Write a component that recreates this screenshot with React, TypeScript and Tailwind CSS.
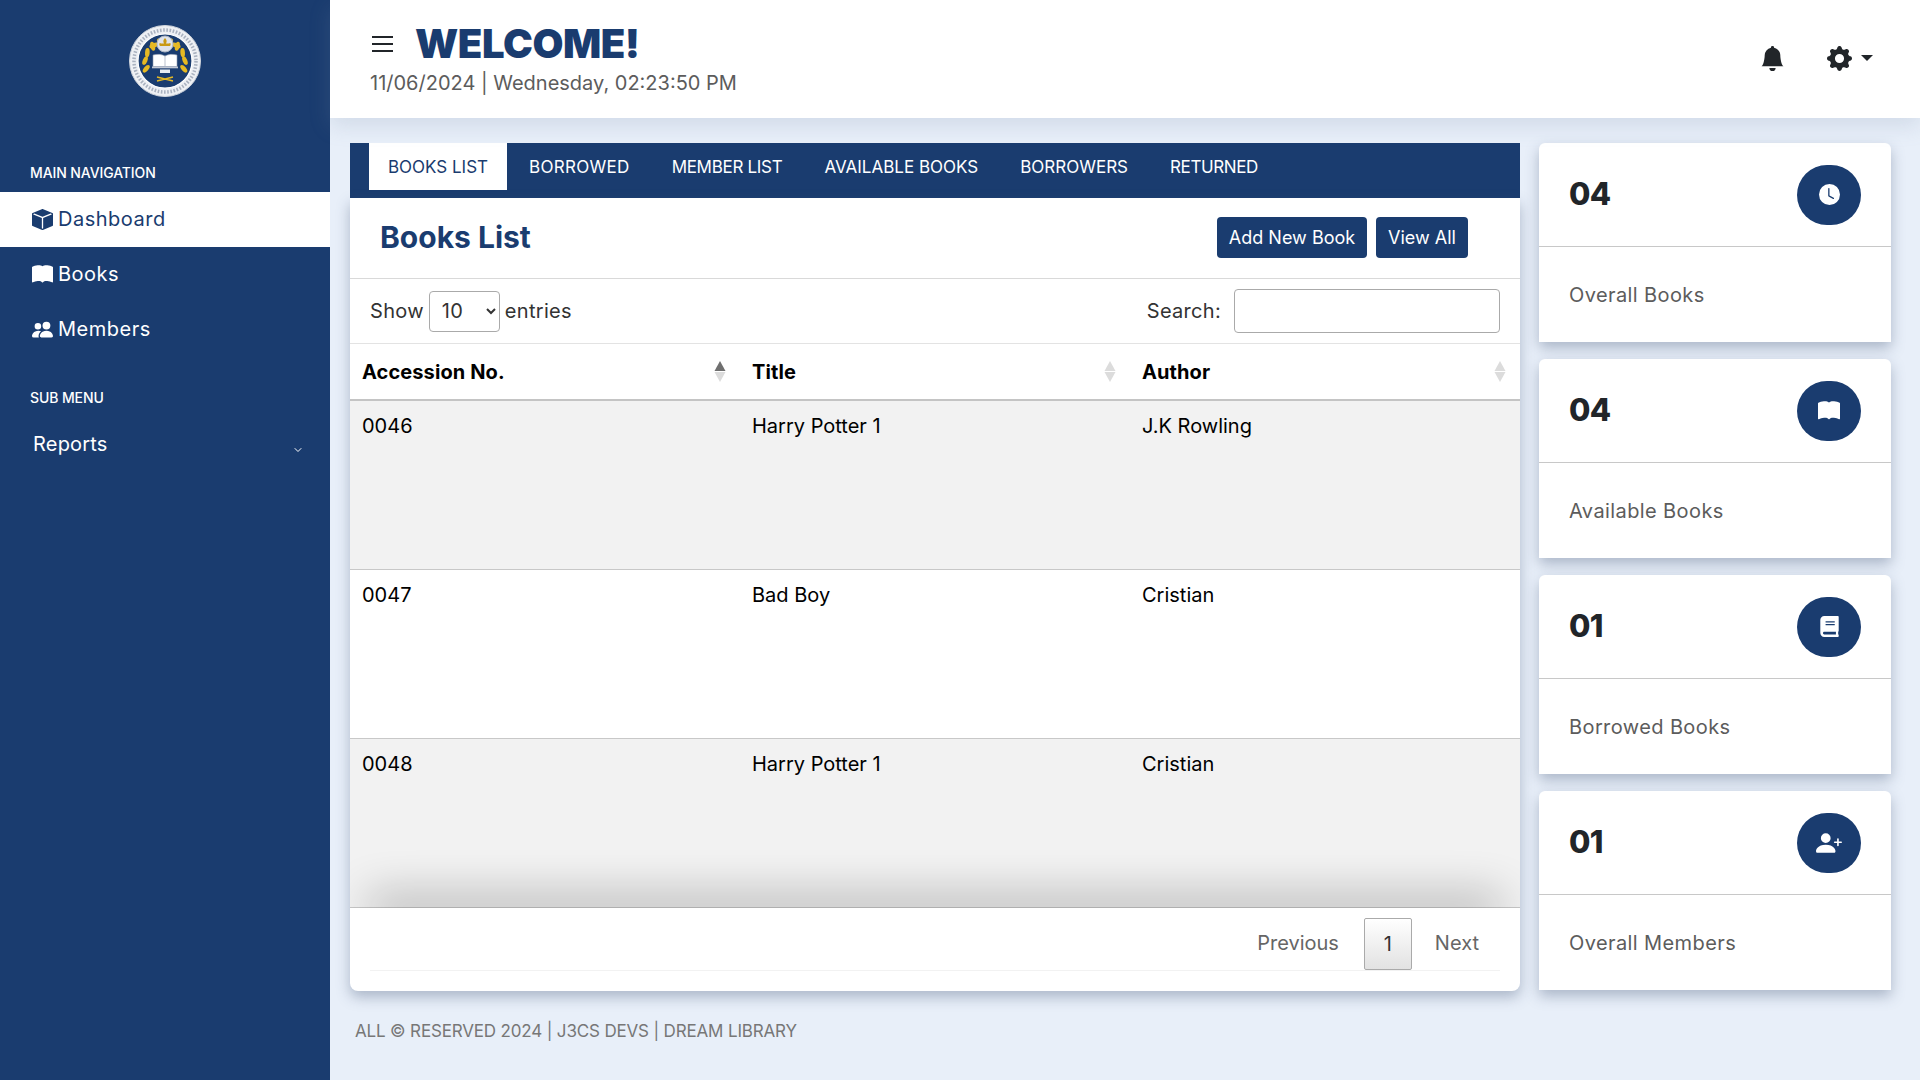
import { BsBellFill, BsBookFill, BsBoxFill, BsClockFill, BsGearFill, BsPeopleFill, BsPersonPlusFill } from 'react-icons/bs';
import { FaBook } from 'react-icons/fa';
import { ChevronDown } from 'lucide-react';

const navItems = [
  { label: 'Dashboard', icon: BsBoxFill, active: true },
  { label: 'Books', icon: BsBookFill, active: false },
  { label: 'Members', icon: BsPeopleFill, active: false },
];

const tabs = [
  { label: 'BOOKS LIST', cls: 'w-[138px] bg-white text-[#1a3c6f]' },
  { label: 'BORROWED', cls: 'ml-[1px] px-[21px] tracking-[0.3px] text-white' },
  { label: 'MEMBER LIST', cls: 'px-[21px] tracking-[-0.3px] text-white' },
  { label: 'AVAILABLE BOOKS', cls: 'px-[21px] text-white' },
  { label: 'BORROWERS', cls: 'px-[21px] text-white' },
  { label: 'RETURNED', cls: 'px-[21px] tracking-[-0.4px] text-white' },
];

const rows = [
  { no: '0046', title: 'Harry Potter 1', author: 'J.K Rowling' },
  { no: '0047', title: 'Bad Boy', author: 'Cristian' },
  { no: '0048', title: 'Harry Potter 1', author: 'Cristian' },
];

const stats = [
  { value: '04', label: 'Overall Books', icon: BsClockFill, size: 'h-[21px] w-[21px]' },
  { value: '04', label: 'Available Books', icon: BsBookFill, size: 'h-[22px] w-[22px]' },
  { value: '01', label: 'Borrowed Books', icon: FaBook, size: 'h-[21px] w-[21px]' },
  { value: '01', label: 'Overall Members', icon: BsPersonPlusFill, size: 'h-[26px] w-[26px]' },
];

function Logo() {
  const leaves = [0, 1, 2, 3, 4, 5, 6];
  return (
    <svg width="72" height="72" viewBox="0 0 72 72">
      <circle cx="36" cy="36" r="35.5" fill="#eef0f4" stroke="#cfd4dc" />
      <circle cx="36" cy="36" r="31" fill="none" stroke="#aab2c0" strokeWidth="3.5" strokeDasharray="1.6 1.6" />
      <circle cx="36" cy="36" r="27" fill="#1a3c6f" stroke="#fff" strokeWidth="1.2" />
      {leaves.map((i) => {
        const a = ((200 - i * 24) * Math.PI) / 180;
        const lx = 36 + 20 * Math.cos(a);
        const rx = 36 - 20 * Math.cos(a);
        const y = 37 - 20 * Math.sin(a) * -1;
        const ty = 37 - (y - 37);
        return (
          <g key={i} fill="#e6b923">
            <ellipse cx={lx} cy={ty} rx="2.3" ry="4.6" transform={`rotate(${-20 - i * 18 + 60} ${lx} ${ty})`} />
            <ellipse cx={rx} cy={ty} rx="2.3" ry="4.6" transform={`rotate(${20 + i * 18 - 60} ${rx} ${ty})`} />
          </g>
        );
      })}
      <circle cx="36" cy="19" r="8" fill="#dfe3ea" stroke="#aeb6c4" />
      <path d="M36 13c2 2 2 3.5 1 5.5h3c1.4-1.5 2.4.5 1 2.5h-10c-1.400-2-.4-4 1-2.500h3c-1-2-1-3.500 1-5.500z" fill="#c99a14" />
      <path d="M24 30c4-1 8.500-1 12 1 3.500-2 8-2 12-1v11.500H24z" fill="#fff" stroke="#8e99ad" strokeWidth="0.6" />
      <path d="M36 31v10.500" stroke="#8e99ad" strokeWidth="0.6" />
      <rect x="23" y="41.500" width="26" height="1.800" fill="#c4cad6" />
      <rect x="31" y="44.500" width="10" height="3.500" fill="#e9edf3" />
      <path d="M28 56l16-4M44 56l-16-4" stroke="#e6b923" strokeWidth="1.4" />
    </svg>
  );
}

function SortArrows({ active = false }: { active?: boolean }) {
  return (
    <span className="mr-[2px] flex flex-col gap-[1px]">
      <svg width="12" height="10" viewBox="0 0 12 10">
        <path d="M6 0l5.500 10H.5z" fill={active ? '#6f6f6f' : '#dcdcdc'} />
      </svg>
      <svg width="12" height="10" viewBox="0 0 12 10">
        <path d="M6 10L.5 0h11z" fill="#dcdcdc" />
      </svg>
    </span>
  );
}

export default function App() {
  return (
    <div className="flex h-[1080px] w-[1920px] overflow-hidden bg-[#e8eff9] font-['Inter',sans-serif]">
      {/* Sidebar */}
      <aside className="w-[330px] shrink-0 bg-[#1a3c6f] text-white">
        <div className="flex justify-center pt-[25px]">
          <Logo />
        </div>
        <p className="mt-[66px] pl-[30px] text-[14px] leading-[20px] font-medium tracking-[-0.1px]">MAIN NAVIGATION</p>
        <nav className="mt-[9px]">
          {navItems.map((item) => (
            <div
              key={item.label}
              className={`flex h-[55px] items-center gap-[5px] pl-[32px] text-[20px] tracking-[0.5px] ${item.active ? 'bg-white text-[#1a3c6f]' : ''}`}
            >
              <item.icon className="h-[21px] w-[21px]" />
              <span className="-mt-[2px]">{item.label}</span>
            </div>
          ))}
        </nav>
        <p className="mt-[31px] pl-[30px] text-[14px] leading-[20px] font-medium tracking-[-0.1px]">SUB MENU</p>
        <div className="mt-[13px] flex h-[46px] items-center justify-between pr-[26px] pl-[33px] text-[20px] tracking-[0.2px]">
          Reports
          <ChevronDown className="mt-[12px] h-[12px] w-[12px]" />
        </div>
      </aside>

      <div className="flex min-w-0 flex-1 flex-col">
        {/* Top bar */}
        <header className="relative z-10 flex h-[118px] shrink-0 items-center justify-between bg-white pr-[47px] pl-[40px] shadow-[0_8px_20px_rgba(120,140,170,0.2)]">
          <div>
            <div className="flex items-center gap-[22px]">
              <div className="ml-[2px] flex w-[21px] flex-col gap-[5px]">
                <span className="h-[2px] bg-[#212529]" />
                <span className="h-[2px] bg-[#212529]" />
                <span className="h-[2px] bg-[#212529]" />
              </div>
              <h1 className="mt-[1px] text-[40px] leading-[46px] font-black tracking-[-0.45px] text-[#1a3c6f]">WELCOME!</h1>
            </div>
            <p className="mt-[1px] text-[20px] leading-[30px] text-[#5c5c5c]">11/06/2024 | Wednesday, 02:23:50 PM</p>
          </div>
          <div className="-mt-[2px] flex items-center text-[#212529]">
            <BsBellFill className="h-[25px] w-[25px]" />
            <BsGearFill className="ml-[42px] h-[25px] w-[25px]" />
            <span className="ml-[9px] h-0 w-0 border-x-[6px] border-t-[6px] border-x-transparent border-t-[#212529]" />
          </div>
        </header>

        <main className="flex flex-1 gap-[19px] pt-[25px] pl-[20px]">
          {/* Books panel */}
          <section className="w-[1170px] shrink-0">
            <div className="flex h-[55px] bg-[#1a3c6f] pl-[19px]">
              {tabs.map((tab) => (
                <div key={tab.label} className={`flex h-[47px] items-center justify-center pt-[2px] text-[17px] ${tab.cls}`}>
                  {tab.label}
                </div>
              ))}
            </div>

            <div className="rounded-b-[8px] bg-white shadow-[0_6px_14px_rgba(70,90,120,0.38)]">
              <div className="flex h-[81px] items-center justify-between border-b border-[#d9d9d9] pr-[52px] pb-[2px] pl-[30px]">
                <h2 className="text-[30px] font-bold text-[#1a3c6f]">Books List</h2>
                <div className="flex gap-[9px] text-[18px] text-white">
                  <button className="h-[41px] w-[150px] rounded-[4px] bg-[#1a3c6f]">Add New Book</button>
                  <button className="h-[41px] w-[92px] rounded-[4px] bg-[#1a3c6f]">View All</button>
                </div>
              </div>

              <div className="flex h-[65px] items-center justify-between border-b border-[#e3e3e3] pr-[20px] pl-[20px] text-[20px] tracking-[0.3px] text-[#333]">
                <div className="flex items-center gap-[5px]">
                  <span>Show</span>
                  <select className="h-[41px] w-[71px] rounded-[4px] border border-[#aaa] bg-white pl-[8px] text-[20px]">
                    <option>10</option>
                  </select>
                  <span>entries</span>
                </div>
                <div className="flex items-center gap-[13px]">
                  <span>Search:</span>
                  <input className="h-[44px] w-[266px] rounded-[4px] border border-[#aaa]" />
                </div>
              </div>

              <div className="relative overflow-hidden">
                <table className="w-full table-fixed text-[20px] text-black">
                  <thead>
                    <tr className="h-[56px] border-b-2 border-[#c4c4c4]">
                      {['Accession No.', 'Title', 'Author'].map((h, i) => (
                        <th key={h} className="px-[12px] text-left font-bold tracking-[0.1px]">
                          <div className="flex items-center justify-between">
                            {h}
                            <SortArrows active={i === 0} />
                          </div>
                        </th>
                      ))}
                    </tr>
                  </thead>
                  <tbody>
                    {rows.map((r, i) => (
                      <tr key={r.no} className={`h-[169px] border-b border-[#c8c8c8] align-top ${i % 2 === 0 ? 'bg-[#f2f2f2]' : 'bg-white'}`}>
                        <td className="px-[12px] pt-[10px] leading-[30px]">{r.no}</td>
                        <td className="px-[12px] pt-[10px] leading-[30px]">{r.title}</td>
                        <td className="px-[12px] pt-[10px] leading-[30px]">{r.author}</td>
                      </tr>
                    ))}
                  </tbody>
                </table>
                {/* scroll shadow along the table bottom */}
                <div className="absolute right-[30px] bottom-0 left-[30px] h-0 shadow-[0_0_44px_12px_rgba(0,0,0,0.3)]" />
              </div>

              <div className="mx-[20px] flex h-[63px] items-start justify-end border-b border-[#f2f2f2] pt-[10px] pr-[21px] text-[20px] text-[#666]">
                <span className="mt-[10px]">Previous</span>
                <span className="mr-[23px] ml-[25px] flex h-[52px] w-[48px] items-center justify-center rounded-[2px] border border-[#aaa] bg-gradient-to-b from-white to-[#e2e2e2] text-[#333]">1</span>
                <span className="mt-[10px]">Next</span>
              </div>
              <div className="h-[20px]" />
            </div>

            <p className="mt-[27px] pl-[5px] text-[17px] leading-[26px] tracking-[-0.16px] text-[#777]">ALL © RESERVED 2024 | J3CS DEVS | DREAM LIBRARY</p>
          </section>

          {/* Stat cards */}
          <section className="flex w-[352px] shrink-0 flex-col gap-[17px]">
            {stats.map((s) => (
              <div key={s.label} className="h-[199px] rounded-t-[6px] bg-white shadow-[0_6px_14px_rgba(70,90,120,0.38)]">
                <div className="flex h-[104px] items-center justify-between border-b border-[#c8c8c8] px-[30px]">
                  <span className="text-[31px] font-extrabold tracking-[-0.8px] text-[#212529]">{s.value}</span>
                  <span className="flex h-[60px] w-[64px] items-center justify-center rounded-full bg-[#1a3c6f] text-white">
                    <s.icon className={s.size} />
                  </span>
                </div>
                <div className="flex h-[95px] items-center pl-[30px] text-[20px] tracking-[0.4px] text-[#5c5c5c]">{s.label}</div>
              </div>
            ))}
          </section>
        </main>
      </div>
    </div>
  );
}
